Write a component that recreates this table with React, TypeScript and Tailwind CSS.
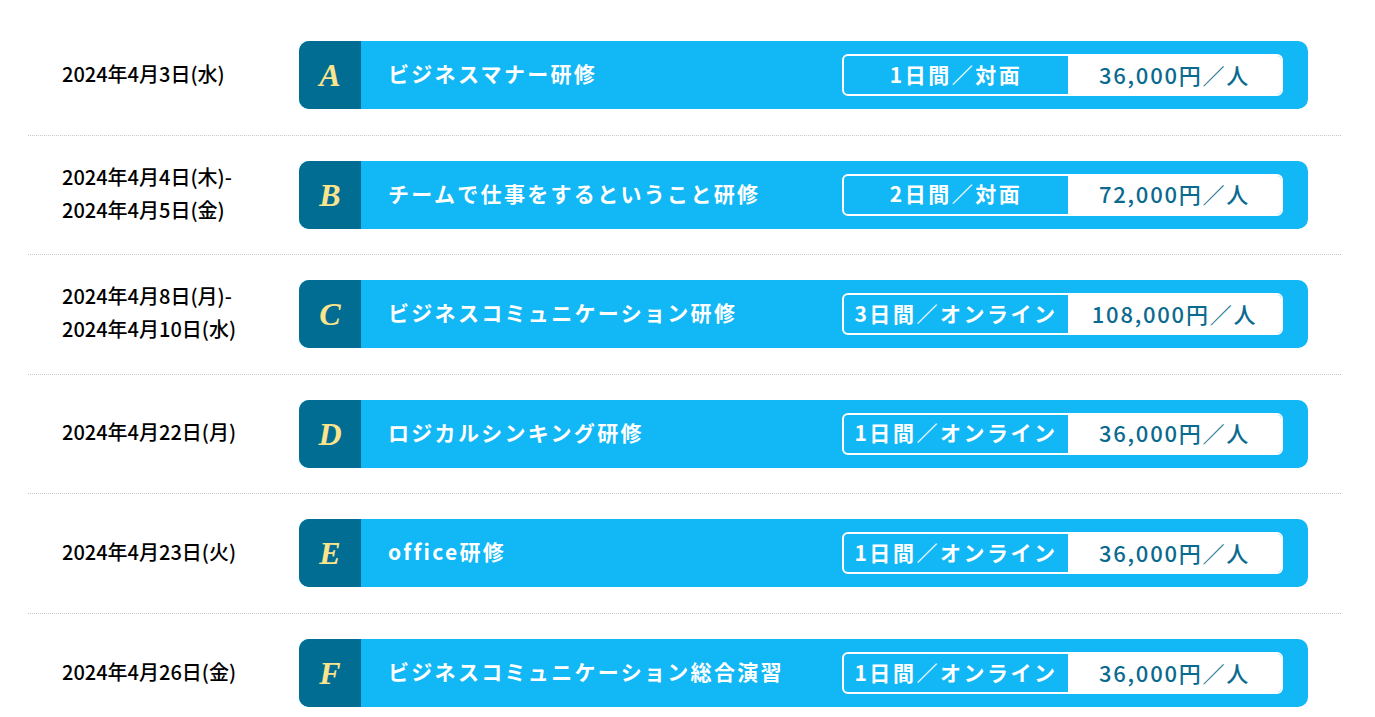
const courses = [
  { dates: ['2024年4月3日(水)'], letter: 'A', title: 'ビジネスマナー研修', term: '1日間／対面', price: '36,000円／人' },
  { dates: ['2024年4月4日(木)-', '2024年4月5日(金)'], letter: 'B', title: 'チームで仕事をするということ研修', term: '2日間／対面', price: '72,000円／人' },
  { dates: ['2024年4月8日(月)-', '2024年4月10日(水)'], letter: 'C', title: 'ビジネスコミュニケーション研修', term: '3日間／オンライン', price: '108,000円／人' },
  { dates: ['2024年4月22日(月)'], letter: 'D', title: 'ロジカルシンキング研修', term: '1日間／オンライン', price: '36,000円／人' },
  { dates: ['2024年4月23日(火)'], letter: 'E', title: 'office研修', term: '1日間／オンライン', price: '36,000円／人' },
  { dates: ['2024年4月26日(金)'], letter: 'F', title: 'ビジネスコミュニケーション総合演習', term: '1日間／オンライン', price: '36,000円／人' },
]

const jp = { fontFamily: '"Noto Sans CJK JP", "Noto Sans", sans-serif' }

function CourseRow({ course, last }: { course: (typeof courses)[number]; last: boolean }) {
  return (
    <div
      className={
        'flex h-[119.5px] items-center ' + (last ? '' : 'border-b border-dotted border-[#c8c8c8]')
      }
    >
      <div className="w-[271px] shrink-0 -translate-y-[2px] pl-[34px] text-[20px] leading-[33px] font-medium text-black">
        {course.dates.map((d) => (
          <div key={d}>{d}</div>
        ))}
      </div>
      <div className="flex h-[68px] w-[1009px] items-center overflow-hidden rounded-[10px] bg-[#12b7f6]">
        <div className="flex h-full w-[62px] shrink-0 items-center justify-center bg-[#026d93]">
          <span
            className="text-[32px] font-bold italic text-[#fbe48c]"
            style={{ fontFamily: '"Liberation Serif", "DejaVu Serif", serif' }}
          >
            {course.letter}
          </span>
        </div>
        <div className="flex-1 pb-[3px] pl-[27px] text-[21px] font-bold tracking-[0.11em] text-white">
          {course.title}
        </div>
        <div className="mr-[25px] flex h-[42px] w-[441px] shrink-0 overflow-hidden rounded-[6px] border-2 border-white">
          <div className="flex w-[224px] items-center justify-center pb-[2px] text-[21px] font-bold tracking-[0.12em] text-white">
            {course.term}
          </div>
          <div className="flex flex-1 items-center justify-center bg-white pb-[2px] text-[22px] font-medium tracking-[0.08em] text-[#0b6a8f]">
            {course.price}
          </div>
        </div>
      </div>
    </div>
  )
}

export default function App() {
  return (
    <div className="min-h-screen bg-white" style={jp}>
      <div className="mx-[28px] w-[1313px] pt-[16px]">
        {courses.map((c, i) => (
          <CourseRow key={c.letter} course={c} last={i === courses.length - 1} />
        ))}
      </div>
    </div>
  )
}
